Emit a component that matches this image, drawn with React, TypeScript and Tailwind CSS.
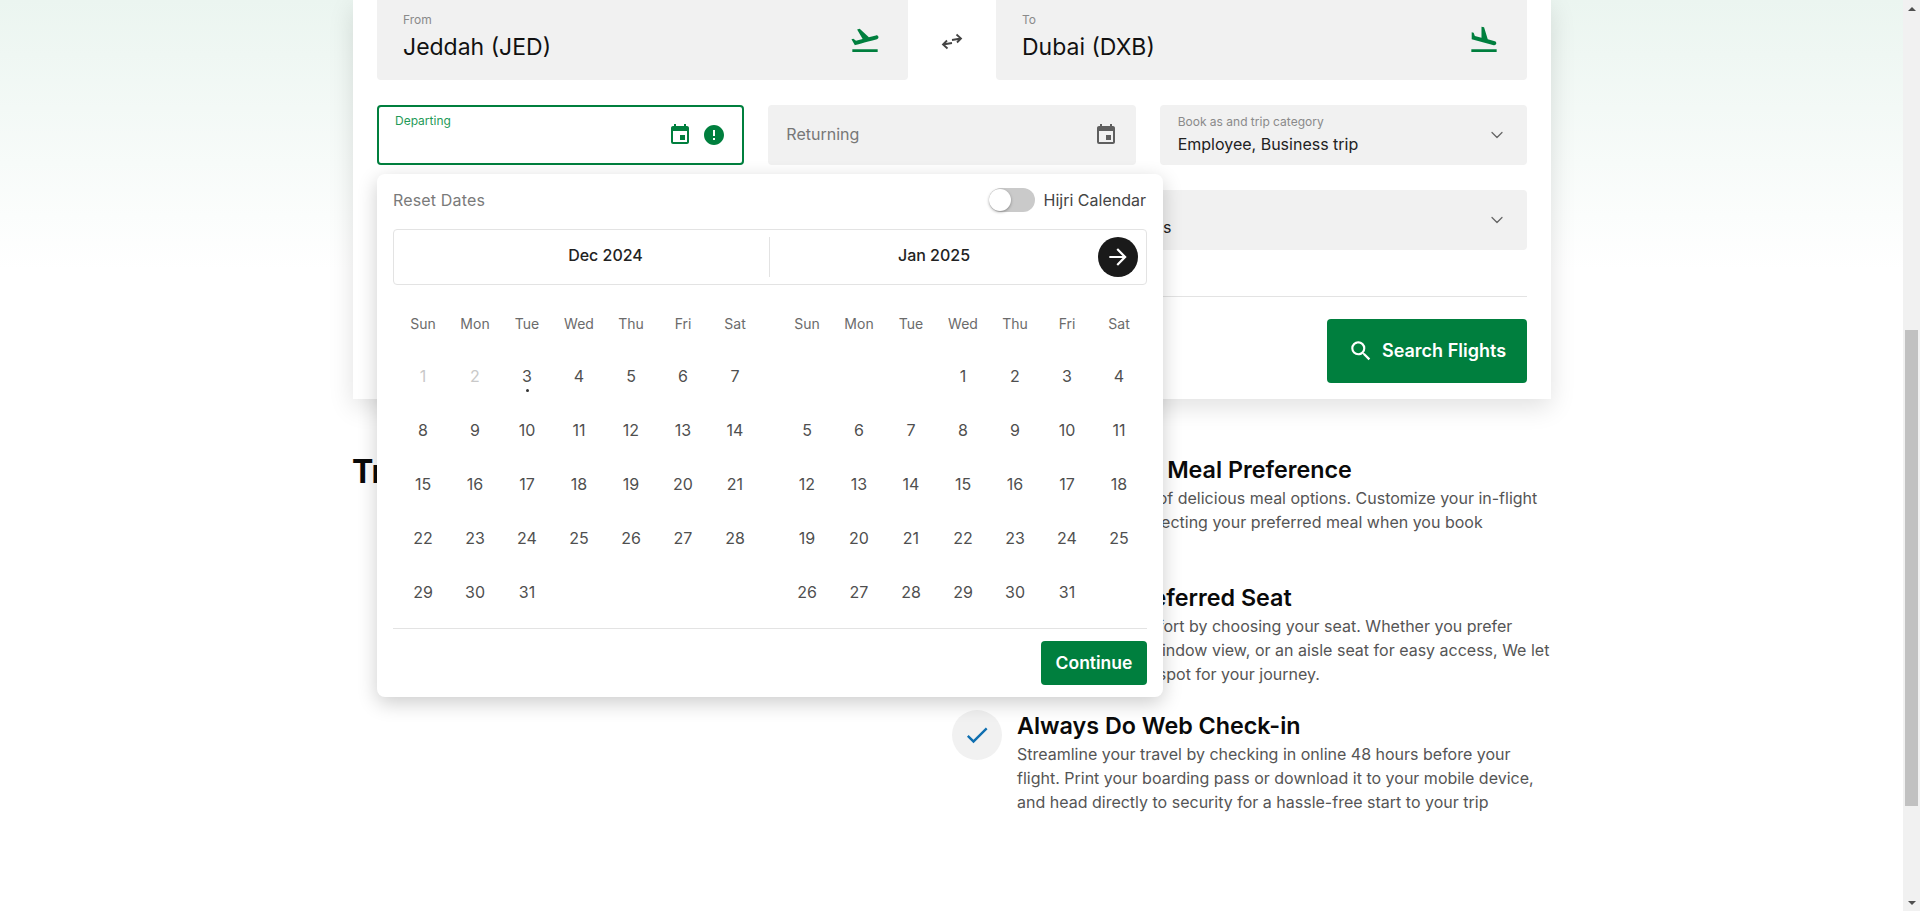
import { MdFlightTakeoff, MdFlightLand, MdEvent, MdError, MdSearch, MdArrowForward, MdCheck } from "react-icons/md";
import { ChevronDown } from "lucide-react";

const weekdays = ["Sun", "Mon", "Tue", "Wed", "Thu", "Fri", "Sat"];

function range(from: number, to: number) {
  const out: number[] = [];
  for (let i = from; i <= to; i++) out.push(i);
  return out;
}

function Month({ blanks, days, disabledUntil = 0, today = 0 }: { blanks: number; days: number; disabledUntil?: number; today?: number }) {
  return (
    <div className="w-[364px]">
      <div className="grid grid-cols-7 h-[36px] items-center text-center text-[14px] text-[#6b6b6b]">
        {weekdays.map((d) => (
          <div key={d}>{d}</div>
        ))}
      </div>
      <div className="grid grid-cols-7 mt-[8px] text-center text-[16px] text-[#4f4f4f]">
        {range(1, blanks).map((b) => (
          <div key={`b${b}`} className="h-[54px]" />
        ))}
        {range(1, days).map((d) => (
          <div key={d} className={`relative h-[54px] leading-[54px] ${d <= disabledUntil ? "text-[#c9c9c9]" : ""}`}>
            {d}
            {d === today && <span className="absolute left-1/2 top-[40px] -ml-[1.5px] w-[3px] h-[3px] rounded-full bg-[#333]" />}
          </div>
        ))}
      </div>
    </div>
  );
}

function DatePopup() {
  return (
    <div className="absolute left-0 top-[69px] z-10 w-[786px] h-[523px] bg-white rounded-lg shadow-[0_6px_20px_rgba(0,0,0,0.2)] px-4">
      <div className="flex items-center justify-between h-[55px] pb-[3px]">
        <span className="text-[16px] text-[#7a7a7a] tracking-[0.01em]">Reset Dates</span>
        <div className="flex items-center gap-[9px] mr-[1px]">
          <div className="relative w-[46px] h-[24px] rounded-full bg-[#cacaca]">
            <div className="absolute left-0 top-[1px] w-[22px] h-[22px] rounded-full bg-white shadow-[0_1px_3px_rgba(0,0,0,0.35)]" />
          </div>
          <span className="text-[16px] text-[#444]">Hijri Calendar</span>
        </div>
      </div>
      <div className="relative flex items-center h-[56px] border border-[#e3e3e3] rounded">
        <div className="w-1/2 h-[40px] pl-[48px] text-center text-[16px] font-medium text-[#222] border-r border-[#e3e3e3] leading-[36px]">Dec 2024</div>
        <div className="w-1/2 h-[40px] pr-[48px] text-center text-[16px] font-medium text-[#222] leading-[36px]">Jan 2025</div>
        <div className="absolute right-[8px] top-[7px] w-10 h-10 rounded-full bg-[#1a1a1a] flex items-center justify-center">
          <MdArrowForward className="text-white" size={26} />
        </div>
      </div>
      <div className="flex gap-5 pl-1 mt-[20px]">
        <Month blanks={0} days={31} disabledUntil={2} today={3} />
        <Month blanks={3} days={31} />
      </div>
      <div className="absolute left-4 right-4 bottom-[68px] border-t border-[#e3e3e3]" />
      <div className="absolute right-4 bottom-[12px] w-[106px] h-[44px] bg-[#007f3e] rounded-sm flex items-center justify-center text-white text-[17.5px] font-semibold">
        Continue
      </div>
    </div>
  );
}

function Tip({ title, lines }: { title: string; lines: string[] }) {
  return (
    <div className="flex gap-[15px]">
      <div className="w-[50px] h-[50px] shrink-0 rounded-full bg-[#f1f1f1] flex items-center justify-center">
        <MdCheck className="text-[#0f6fb0]" size={28} />
      </div>
      <div>
        <h3 className="text-[23.3px] leading-[32px] font-semibold text-[#0a0a0a] whitespace-nowrap">{title}</h3>
        <div className="text-[16px] leading-[24px] text-[#555] whitespace-nowrap">
          {lines.map((l) => (
            <div key={l}>{l}</div>
          ))}
        </div>
      </div>
    </div>
  );
}

export default function App() {
  return (
    <div className="flex h-[911px] overflow-hidden bg-white font-['Inter',sans-serif]">
      <div className="flex-1 min-w-0 bg-gradient-to-b from-[#ebf5f0] to-white to-[270px]">
        <div className="w-[1198px] ml-[353px]">
          <section className="bg-white px-6 pb-4 shadow-[0_8px_24px_rgba(0,0,0,0.12)]">
            <div className="flex items-stretch">
              <div className="flex-1 h-20 bg-[#f1f1f1] rounded-b flex items-center justify-between pl-[26px] pr-[27px]">
                <div className="-mt-[6px]">
                  <div className="text-[12px] leading-[16px] text-[#8a8a8a]">From</div>
                  <div className="text-[23px] leading-[32px] text-[#111] mt-[3px]">Jeddah (JED)</div>
                </div>
                <MdFlightTakeoff className="text-[#007f3e]" size={32} />
              </div>
              <div className="w-[88px] flex items-center justify-center">
                <svg width="24" height="24" viewBox="0 0 24 24" fill="none" stroke="#444" strokeWidth="1.8">
                  <path d="M12 12l9-1.5M16.5 6.5l4.5 4-4 4" />
                  <path d="M12 15l-9 1.5M7.5 20.5l-4.5-4 4-4" />
                </svg>
              </div>
              <div className="flex-1 h-20 bg-[#f1f1f1] rounded-b flex items-center justify-between pl-[26px] pr-[27px]">
                <div className="-mt-[6px]">
                  <div className="text-[12px] leading-[16px] text-[#8a8a8a]">To</div>
                  <div className="text-[23px] leading-[32px] text-[#111] mt-[3px]">Dubai (DXB)</div>
                </div>
                <MdFlightLand className="text-[#007f3e]" size={32} />
              </div>
            </div>
            <div className="relative grid grid-cols-3 gap-6 mt-[25px]">
              <div className="h-[60px] border-2 border-[#007f3e] rounded flex items-center justify-between pl-[16px] pr-[16px]">
                <span className="self-start mt-[6px] text-[12px] leading-[16px] text-[#1f9a58]">Departing</span>
                <div className="flex items-center gap-[10px]">
                  <MdEvent className="text-[#007f3e]" size={24} />
                  <MdError className="text-[#007f3e]" size={24} />
                </div>
              </div>
              <div className="h-[60px] bg-[#f1f1f1] rounded flex items-center justify-between pl-[18px] pr-[18px]">
                <span className="text-[16px] text-[#777] -mt-[2px]">Returning</span>
                <MdEvent className="text-[#5f5f5f]" size={24} />
              </div>
              <div className="h-[60px] bg-[#f1f1f1] rounded flex items-center justify-between pl-[18px] pr-[20px]">
                <div className="-mt-[2px]">
                  <div className="text-[12px] leading-[16px] text-[#8a8a8a]">Book as and trip category</div>
                  <div className="text-[16px] leading-[22px] text-[#222] mt-[3px]">Employee, Business trip</div>
                </div>
                <ChevronDown className="text-[#666]" size={20} strokeWidth={1.5} />
              </div>
              <DatePopup />
            </div>
            <div className="grid grid-cols-3 gap-6 mt-[25px]">
              <div className="col-span-2 col-start-2 h-[60px] bg-[#f1f1f1] rounded flex items-center justify-between pr-[20px]">
                <span className="w-[403px] text-right text-[16px] text-[#222] mt-[14px]">Passengers</span>
                <ChevronDown className="text-[#666]" size={20} strokeWidth={1.5} />
              </div>
            </div>
            <div className="border-t border-[#e3e3e3] mt-[46px]" />
            <div className="flex justify-end mt-[22px]">
              <div className="w-[200px] h-16 bg-[#007f3e] rounded flex items-center justify-center gap-[8px] text-white text-[18px] font-semibold">
                <MdSearch size={26} />
                <span className="-mt-[2px]">Search Flights</span>
              </div>
            </div>
          </section>
          <div className="flex mt-[53px]">
            <h2 className="w-[599px] -ml-[1px] text-[32px] leading-[40px] font-bold text-[#0a0a0a]">Travel Tips</h2>
            <div className="flex flex-col gap-[24px] mt-[2px] ml-[1px]">
              <Tip
                title="Choose Your Meal Preference"
                lines={["Discover a variety of delicious meal options. Customize your in-flight", "your journey by selecting your preferred meal when you book", "your flight."]}
              />
              <Tip
                title="Pick Your Preferred Seat"
                lines={["Enhance your comfort by choosing your seat. Whether you prefer", "extra leg room, a window view, or an aisle seat for easy access, We let", "you pick a perfect spot for your journey."]}
              />
              <Tip
                title="Always Do Web Check-in"
                lines={["Streamline your travel by checking in online 48 hours before your", "flight. Print your boarding pass or download it to your mobile device,", "and head directly to security for a hassle-free start to your trip"]}
              />
            </div>
          </div>
        </div>
      </div>
      <div className="w-[17px] shrink-0 bg-[#f1f1f1] flex flex-col items-center justify-between">
        <div className="h-[17px] flex items-center justify-center">
          <div className="w-0 h-0 border-x-[4px] border-x-transparent border-b-[4px] border-b-[#505050]" />
        </div>
        <div className="w-[13px] h-[476px] bg-[#c1c1c1] mt-[313px] mb-[88px]" />
        <div className="h-[17px] flex items-center justify-center">
          <div className="w-0 h-0 border-x-[4px] border-x-transparent border-t-[4px] border-t-[#505050]" />
        </div>
      </div>
    </div>
  );
}
